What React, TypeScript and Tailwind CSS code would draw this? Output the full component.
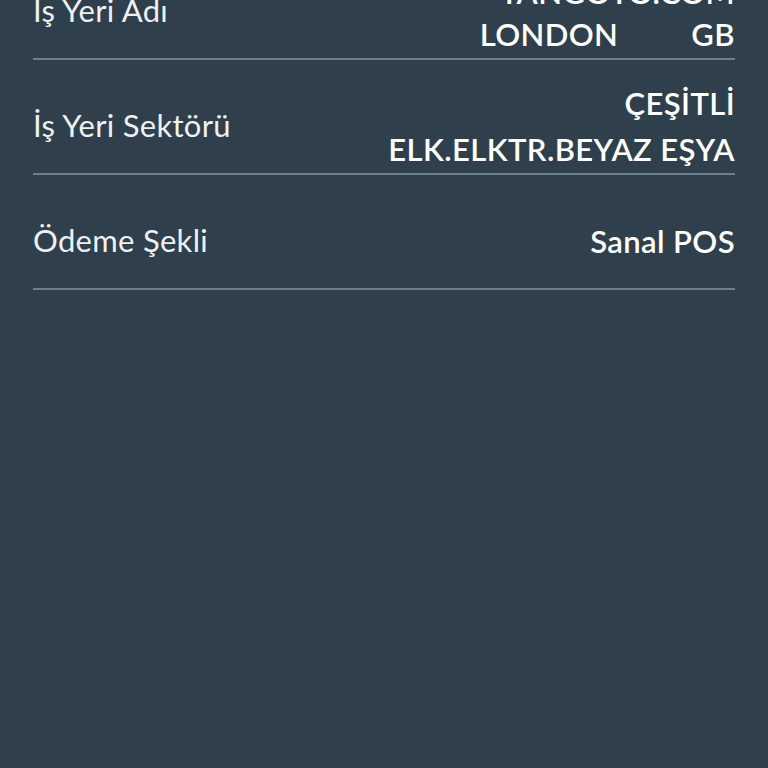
import React from "react";

const rows: { label: string; lines: string[] }[] = [
  { label: "İş Yeri Adı", lines: ["TANGOTO.COM", "LONDON         GB"] },
  { label: "İş Yeri Sektörü", lines: ["ÇEŞİTLİ", "ELK.ELKTR.BEYAZ EŞYA"] },
  { label: "Ödeme Şekli", lines: ["Sanal POS"] },
];

export default function App() {
  return (
    <div
      className="h-[768px] overflow-hidden bg-[#2f3f4b] px-[33px] text-white"
      style={{ fontFamily: "Lato, 'Noto Sans', sans-serif" }}
    >
      <div className="-mt-[55px] flex flex-col">
        {rows.map((r) => (
          <div
            key={r.label}
            className="flex h-[115px] items-center justify-between border-b-2 border-[#6a7f8c] pt-[18px]"
          >
            <div className="text-[31px] font-normal tracking-[0.3px] text-[#eef1f3]">{r.label}</div>
            <div className="flex flex-col items-end text-[31px] font-semibold leading-[46px] tracking-[0.4px]">
              {r.lines.map((l, i) => (
                <div key={l} className={i === 0 && r.lines.length > 1 && r.label === "İş Yeri Adı" ? "whitespace-pre translate-y-[4px]" : "whitespace-pre"}>
                  {l}
                </div>
              ))}
            </div>
          </div>
        ))}
      </div>
    </div>
  );
}
